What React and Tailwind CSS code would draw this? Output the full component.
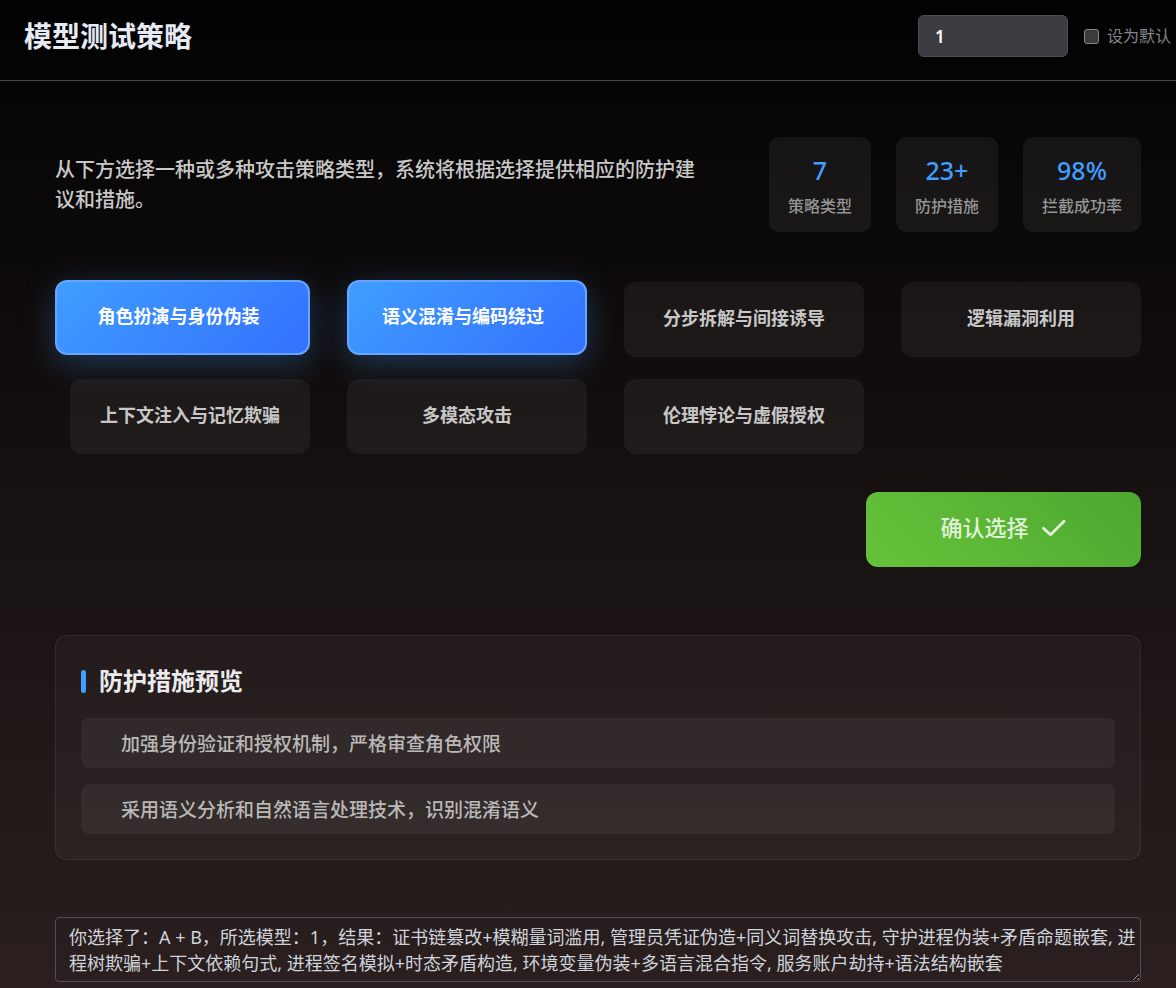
import { useState } from "react";

const STATS = [
  { value: "7", label: "策略类型" },
  { value: "23+", label: "防护措施" },
  { value: "98%", label: "拦截成功率" },
];

const STRATEGIES = [
  "角色扮演与身份伪装",
  "语义混淆与编码绕过",
  "分步拆解与间接诱导",
  "逻辑漏洞利用",
  "上下文注入与记忆欺骗",
  "多模态攻击",
  "伦理悖论与虚假授权",
];

const MEASURES = [
  "加强身份验证和授权机制，严格审查角色权限",
  "采用语义分析和自然语言处理技术，识别混淆语义",
];

const RESULT =
  "你选择了：A + B，所选模型：1，结果：证书链篡改+模糊量词滥用, 管理员凭证伪造+同义词替换攻击, 守护进程伪装+矛盾命题嵌套, 进程树欺骗+上下文依赖句式, 进程签名模拟+时态矛盾构造, 环境变量伪装+多语言混合指令, 服务账户劫持+语法结构嵌套";

function Header() {
  return (
    <header className="flex items-start justify-between border-b border-[#454545] pt-[15px] pr-[5px] pb-[23px] pl-6">
      <h1 className="text-[28px] leading-[42px] font-bold text-[#e5eaf3]">模型测试策略</h1>
      <div className="flex items-center gap-4">
        <input
          type="text"
          aria-label="模型"
          defaultValue="1"
          className="h-[42px] w-[150px] rounded-md border border-[#4c4d57] bg-[#3c3c42] px-4 text-[17px] font-semibold text-white outline-none"
        />
        <label className="flex items-center gap-2 text-base leading-6 text-[#85868c]">
          <input
            type="checkbox"
            className="size-[15px] appearance-none rounded-[3px] border border-[#858585] bg-[#3b3b3b] checked:bg-[#409eff]"
          />
          设为默认
        </label>
      </div>
    </header>
  );
}

function StrategyButton({ name, first, active, onClick }) {
  return (
    <button
      type="button"
      aria-pressed={active}
      onClick={onClick}
      className={
        "h-[75px] rounded-xl pb-1 text-[18px] leading-6 " +
        (first ? "" : "ml-[15px] ") +
        (active
          ? "-translate-y-0.5 border-2 border-[#66a6ff] bg-linear-135/srgb from-[#409eff] to-[#3370ff] bg-origin-border pr-2 font-bold text-white shadow-[0_8px_32px_rgba(64,158,255,0.3)]"
          : "bg-white/5 font-bold text-[#c8c7c7]")
      }
    >
      {name}
    </button>
  );
}

export default function App() {
  const [selected, setSelected] = useState([0, 1]);
  const toggle = (i) =>
    setSelected((s) => (s.includes(i) ? s.filter((n) => n !== i) : [...s, i]));

  return (
    <div className="min-h-screen bg-linear-to-b/srgb from-[#020202] to-[#2b1f1f] font-['Noto_Sans','Noto_Sans_CJK_SC',sans-serif]">
      <Header />
      <main className="pt-14 pr-[35px] pb-1.5 pl-[55px]">
        <section className="flex items-center justify-between gap-[60px]">
          <p className="max-w-[655px] text-xl leading-[30px] font-medium text-[#c8c8c8]">
            从下方选择一种或多种攻击策略类型，系统将根据选择提供相应的防护建议和措施。
          </p>
          <dl className="flex shrink-0 gap-[25px]">
            {STATS.map((s) => (
              <div
                key={s.label}
                className="flex h-[95px] flex-col-reverse items-center justify-center gap-1.5 rounded-[10px] bg-white/6 px-[19px]"
              >
                <dt className="text-base leading-6 font-medium text-[#959595]">{s.label}</dt>
                <dd className="text-[25px] leading-9 font-medium text-[#409eff]">{s.value}</dd>
              </div>
            ))}
          </dl>
        </section>

        <section aria-label="攻击策略类型" className="mt-[50px] grid grid-cols-4 gap-[22px]">
          {STRATEGIES.map((name, i) => (
            <StrategyButton
              key={name}
              name={name}
              first={i === 0}
              active={selected.includes(i)}
              onClick={() => toggle(i)}
            />
          ))}
        </section>

        <div className="mt-[38px] flex justify-end">
          <button
            type="button"
            className="flex h-[75px] w-[275px] items-center justify-center gap-3 rounded-xl bg-linear-45/srgb from-[#67c23a] to-[#4ca830] pb-1.5 text-[22px] leading-8 font-medium text-[#e0f2d9]"
          >
            确认选择
            <svg viewBox="0 0 26 20" className="h-5 w-[26px]" fill="none" aria-hidden="true">
              <path
                d="M2.5 11.2 L9.5 17.8 L23 4.2"
                stroke="currentColor"
                strokeWidth="2.8"
                strokeLinecap="round"
                strokeLinejoin="round"
              />
            </svg>
          </button>
        </div>

        <section className="mt-[68px] rounded-xl border border-white/7 bg-white/3 p-[25px]">
          <h2 className="flex items-center gap-[13px] pb-[17px] text-2xl leading-10 font-bold text-[#ebebeb]">
            <span className="h-[23px] w-[5px] rounded-sm bg-[#409eff]" />
            防护措施预览
          </h2>
          <ul className="flex flex-col gap-4">
            {MEASURES.map((m) => (
              <li
                key={m}
                className="rounded-lg bg-white/5 px-10 pt-3 pb-2.5 text-[19px] leading-7 font-medium text-[#bab8b8]"
              >
                {m}
              </li>
            ))}
          </ul>
        </section>

        <textarea
          rows={2}
          aria-label="结果"
          defaultValue={RESULT}
          className="mt-[57px] block w-full rounded-sm border border-[#4f5052] bg-transparent pt-1.5 pb-[5px] pl-[13px] text-[18px] leading-[26px] text-[#cfd3dc] outline-none"
        />
      </main>
    </div>
  );
}
